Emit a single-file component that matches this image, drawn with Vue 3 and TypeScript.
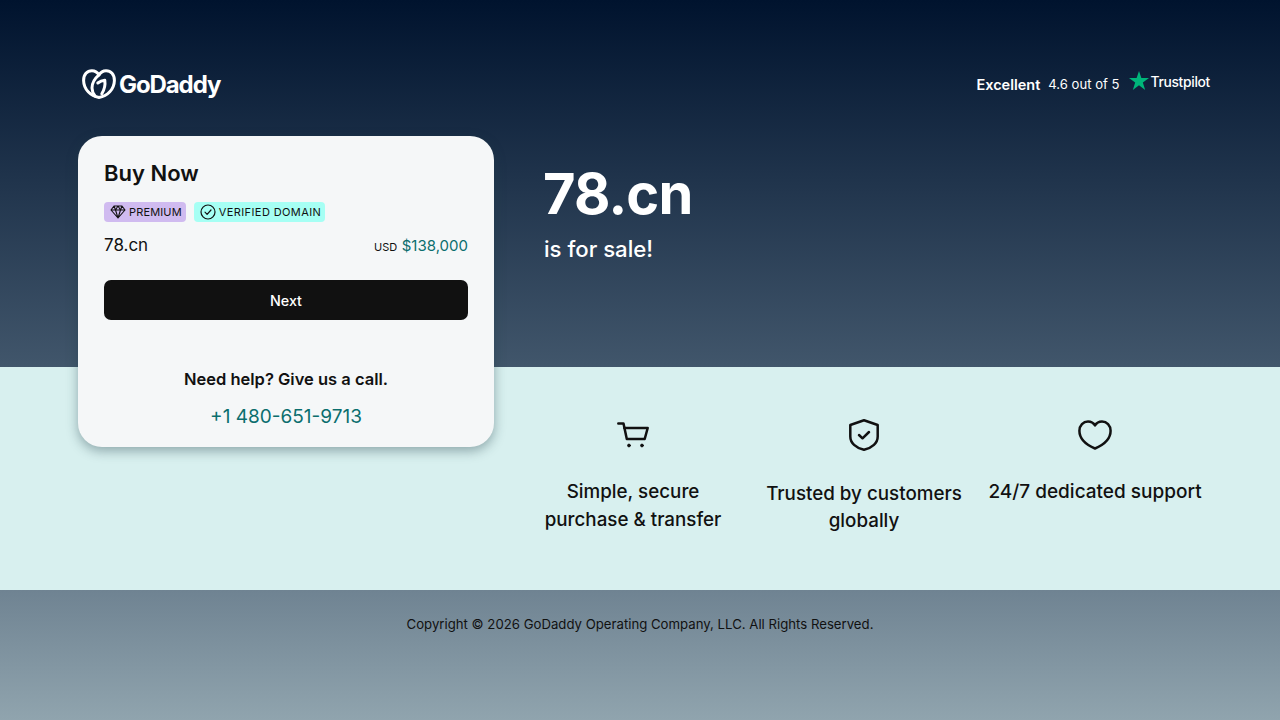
<script setup lang="ts">
const features = [
  { key: "cart", lines: ["Simple, secure", "purchase & transfer"] },
  { key: "shield", lines: ["Trusted by customers", "globally"] },
  { key: "heart", lines: ["24/7 dedicated support"] },
];
</script>

<template>
  <div class="page">
    <section class="hero">
      <header class="top">
        <div class="logo">
          <svg class="logo-mark" viewBox="0 0 34 30" width="34" height="30" fill="none" stroke="#fff" stroke-width="3" stroke-linecap="round" stroke-linejoin="round">
            <path d="M17 28.400C8.500 27 1.800 20.400 1.600 11.500 1.500 5.500 5.200 1.600 10 1.700c3 .1 5.400 1.700 7 4.200 1.600-2.500 4-4.100 7-4.200 4.800-.1 8.500 3.800 8.400 9.800-.2 8.900-6.900 15.500-15.400 16.900Z" />
            <path d="M17 5.900c-3.800 3.200-7 8.400-7 13.100 0 2.800 1 5.400 3 8" />
            <path d="M15.800 14c2-1.600 4.400-2.600 7-2.800 .6 4.200-.3 9.200-3 13.600" />
          </svg>
          <span class="logo-text">GoDaddy</span>
        </div>
        <div class="rating">
          <strong>Excellent</strong>
          <span class="score">4.6 out of 5</span>
          <span class="trustpilot">
            <svg viewBox="0 0 20 19" width="20" height="19"><path fill="#00b67a" d="M10 0l2.360 7.050H20l-6.180 4.400L16.180 19 10 14.350 3.820 19l2.360-7.550L0 7.050h7.640z" /></svg>
            <span>Trustpilot</span>
          </span>
        </div>
      </header>
      <div class="hero-body">
        <aside class="card">
          <h2>Buy Now</h2>
          <div class="badges">
            <span class="badge premium">
              <svg viewBox="0 0 16 14" width="16" height="14" fill="none" stroke="#111" stroke-width="1.100" stroke-linejoin="round"><path d="M4 1h8l3 4-7 8-7-8zM1 5h14M5.500 5 8 13l2.500-8L8 1 5.500 5ZM4 1l1.500 4M12 1l-1.500 4" /></svg>
              PREMIUM
            </span>
            <span class="badge verified">
              <svg viewBox="0 0 16 16" width="16" height="16" fill="none" stroke="#111" stroke-width="1.200" stroke-linecap="round" stroke-linejoin="round"><circle cx="8" cy="8" r="7" /><path d="m5 8.200 2.100 2.100L11 6" /></svg>
              VERIFIED DOMAIN
            </span>
          </div>
          <div class="price-row">
            <span class="domain">78.cn</span>
            <span class="price"><small>USD</small> <b>$138,000</b></span>
          </div>
          <button class="next">Next</button>
          <div class="help">
            <p>Need help? Give us a call.</p>
            <a href="#">+1 480-651-9713</a>
          </div>
        </aside>
        <div class="headline">
          <h1>78.cn</h1>
          <p>is for sale!</p>
        </div>
      </div>
    </section>

    <section class="features">
      <div v-for="f in features" :key="f.key" class="feature" :class="f.key">
        <svg v-if="f.key === 'cart'" viewBox="0 0 32 28" width="32" height="28" fill="none" stroke="#111" stroke-width="2.500" stroke-linecap="round" stroke-linejoin="round">
          <path d="M1.300 2.500h5.200l3.300 15.500h17" /><path d="M7.400 7H30.700l-3 11" />
          <circle cx="12" cy="24.500" r="1.400" fill="#111" stroke-width="1" /><circle cx="25" cy="24.500" r="1.400" fill="#111" stroke-width="1" />
        </svg>
        <svg v-else-if="f.key === 'shield'" viewBox="0 0 30 32" width="30" height="32" fill="none" stroke="#111" stroke-width="2.500" stroke-linecap="round" stroke-linejoin="round">
          <path d="M15 1.300 28.700 6v11.500c0 6.500-5.500 11.500-13.700 13.300C6.800 29 1.300 24 1.300 17.500V6Z" />
          <path d="m10 16 3.500 3.300L20 13" />
        </svg>
        <svg v-else viewBox="0 0 34 30" width="34" height="30" fill="none" stroke="#111" stroke-width="2.500" stroke-linejoin="round">
          <path d="M17 28.500C7.500 24.500 1.400 18.500 1.400 10.800 1.400 5.300 5.300 1.400 10 1.400c3 0 5.500 1.400 7 4 1.500-2.600 4-4 7-4 4.700 0 8.600 3.900 8.600 9.400 0 7.700-6.100 13.700-15.600 17.700Z" />
        </svg>
        <p><template v-for="(l, i) in f.lines" :key="i">{{ l }}<br v-if="i < f.lines.length - 1" /></template></p>
      </div>
    </section>

    <footer class="foot">Copyright © 2026 GoDaddy Operating Company, LLC. All Rights Reserved.</footer>
  </div>
</template>

<style>
html,
body {
  margin: 0;
}
</style>

<style scoped>
.page {
  width: 1280px;
  height: 720px;
  overflow: hidden;
  display: flex;
  flex-direction: column;
  font-family: "Inter", "Liberation Sans", sans-serif;
  color: #111;
}

.hero {
  position: relative;
  z-index: 1;
  height: 367px;
  flex: none;
  box-sizing: border-box;
  padding: 68px 70px 0 78px;
  background: linear-gradient(180deg, #00132e 0%, #41566b 100%);
  color: #fff;
}

.top {
  height: 32px;
  display: flex;
  align-items: center;
  justify-content: space-between;
}

.logo {
  display: flex;
  align-items: center;
  gap: 3px;
  padding-left: 4px;
}

.logo-text {
  font-size: 24px;
  font-weight: 700;
  letter-spacing: -1.100px;
}

.rating {
  display: flex;
  align-items: center;
}

.rating strong {
  font-size: 14.500px;
  font-weight: 600;
  margin-right: 8px;
}

.score {
  font-size: 13.100px;
  margin-right: 9px;
}

.trustpilot {
  display: flex;
  align-items: center;
  gap: 2px;
  font-size: 13.800px;
  font-weight: 500;
  letter-spacing: -0.300px;
  margin-top: -4px;
}

.trustpilot svg {
  margin-top: -4px;
}

.hero-body {
  display: flex;
  margin-top: 36px;
}

.card {
  width: 416px;
  height: 311px;
  flex: none;
  box-sizing: border-box;
  padding: 24px 26px;
  background: #f5f7f8;
  border-radius: 24px;
  box-shadow: 0 4px 12px rgba(30, 60, 70, 0.4);
  color: #111;
}

.card h2 {
  margin: 0;
  font-size: 22px;
  line-height: 27px;
  font-weight: 600;
}

.badges {
  display: flex;
  gap: 8px;
  margin-top: 15px;
}

.badge {
  height: 20px;
  display: flex;
  align-items: center;
  gap: 3px;
  padding: 0 4px 0 6px;
  border-radius: 4px;
  font-size: 11px;
}

.premium {
  background: #d0bbf0;
  letter-spacing: 0.150px;
}

.verified {
  background: #a6fff4;
  letter-spacing: 0.400px;
}

.price-row {
  display: flex;
  align-items: center;
  justify-content: space-between;
  margin-top: 11px;
  height: 24px;
}

.domain {
  font-size: 17px;
}

.price small {
  font-size: 11px;
}

.price b {
  font-size: 15px;
  font-weight: 400;
  color: #0b6e6e;
}

.next {
  display: block;
  width: 100%;
  height: 40px;
  margin-top: 23px;
  border: 0;
  border-radius: 7px;
  background: #111;
  color: #fff;
  font: 500 14.300px "Inter", sans-serif;
}

.help {
  margin-top: 48px;
  text-align: center;
}

.help p {
  margin: 0;
  font-size: 16.500px;
  line-height: 22px;
  font-weight: 600;
}

.help a {
  display: block;
  margin-top: 14px;
  font-size: 19px;
  line-height: 26px;
  color: #0b6e6e;
  text-decoration: none;
}

.headline {
  margin-left: 49px;
  margin-top: 23px;
}

.headline h1 {
  margin: 0;
  font-size: 56px;
  line-height: 70px;
  font-weight: 700;
  letter-spacing: -0.800px;
}

.headline p {
  margin: 5px 0 0 1px;
  font-size: 22.200px;
  line-height: 30px;
  font-weight: 500;
}

.features {
  height: 223px;
  flex: none;
  box-sizing: border-box;
  padding: 52px 77.500px 0 525.500px;
  background: #d8f0ef;
  display: grid;
  grid-template-columns: repeat(3, 1fr);
  column-gap: 16px;
}

.feature {
  display: flex;
  flex-direction: column;
  align-items: center;
  text-align: center;
}

.feature svg {
  height: 32px;
}

.feature p {
  margin: 27px 0 0;
  font-size: 18.800px;
  line-height: 28px;
  font-weight: 500;
  white-space: nowrap;
}

.feature.shield p {
  margin-top: 29px;
  line-height: 27px;
}

.feature.heart p {
  font-size: 19px;
}

.foot {
  flex: 1;
  padding-top: 26px;
  text-align: center;
  font-size: 13.200px;
  line-height: 17px;
  background: linear-gradient(180deg, #6f8392 0%, #90a4ae 100%);
  color: #111;
}
</style>
